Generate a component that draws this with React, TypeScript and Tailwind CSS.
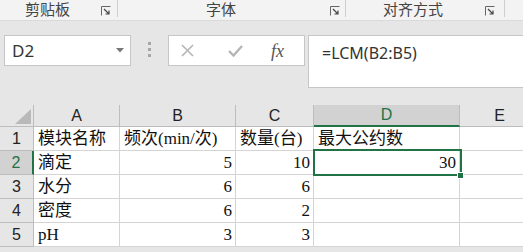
import React from "react";

const CJK = '"Liberation Serif", "Noto Sans CJK SC", serif';
const UI = '"Noto Sans", "Noto Sans CJK SC", sans-serif';
const HDR = '"Liberation Sans", sans-serif';

function Launcher() {
  return (
    <svg width="10" height="10" viewBox="0 0 10 10" className="shrink-0">
      <path d="M0.5 9.5 V0.5 H9.5" fill="none" stroke="#666" strokeWidth="1" />
      <path d="M3 3 L8 8 M8 4.5 V8 H4.5" fill="none" stroke="#444" strokeWidth="1.2" />
    </svg>
  );
}

type Cell = { t: string; r?: boolean };

const rows: Cell[][] = [
  [{ t: "模块名称" }, { t: "频次(min/次)" }, { t: "数量(台)" }, { t: "最大公约数" }, { t: "" }],
  [{ t: "滴定" }, { t: "5", r: true }, { t: "10", r: true }, { t: "30", r: true }, { t: "" }],
  [{ t: "水分" }, { t: "6", r: true }, { t: "6", r: true }, { t: "" }, { t: "" }],
  [{ t: "密度" }, { t: "6", r: true }, { t: "2", r: true }, { t: "" }, { t: "" }],
  [{ t: "pH" }, { t: "3", r: true }, { t: "3", r: true }, { t: "" }, { t: "" }],
];

const cols = ["A", "B", "C", "D", "E"];

function Group({ w, label, gap, launch }: { w: string; label: string; gap: string; launch: string }) {
  return (
    <div className={"flex items-start h-full " + w}>
      <div className="flex-1 flex items-center h-[19px]">
        <span className={"leading-[19px] " + gap}>{label}</span>
        <span className={"mt-[2px] " + launch}><Launcher /></span>
      </div>
      <div className="w-px h-[17px] bg-[#cfcfcf]" />
    </div>
  );
}

export default function App() {
  return (
    <div className="w-[523px] h-[252px] overflow-hidden bg-[#e6e6e6] relative">
      {/* ribbon group labels */}
      <div
        className="h-[21px] bg-[#f3f3f3] border-b border-[#dadada] flex items-start text-[15px] text-[#444]"
        style={{ fontFamily: UI }}
      >
        <Group w="w-[118px]" label="剪贴板" gap="ml-[25px]" launch="ml-[31px]" />
        <Group w="w-[228px]" label="字体" gap="ml-[88px]" launch="ml-[94px]" />
        <Group w="w-[159px]" label="对齐方式" gap="ml-[37px]" launch="ml-[42px]" />
      </div>

      {/* formula bar */}
      <div className="flex items-start pt-[14px] h-[84px]">
        <div className="ml-[4px] w-[127px] h-[31px] bg-white border border-[#c6c6c6] flex items-center justify-between pl-[7px] pr-[6px]">
          <span className="text-[17px] text-[#333] leading-none" style={{ fontFamily: UI }}>D2</span>
          <svg width="8" height="5" viewBox="0 0 8 5"><path d="M0 0 H8 L4 4.5 Z" fill="#777" /></svg>
        </div>
        <div className="ml-[17px] mt-[7px] flex flex-col gap-[3px]">
          <div className="w-[3px] h-[3px] bg-[#a6a6a6]" />
          <div className="w-[3px] h-[3px] bg-[#a6a6a6]" />
          <div className="w-[3px] h-[3px] bg-[#a6a6a6]" />
        </div>
        <div className="ml-[17px] w-[137px] h-[31px] bg-white border border-[#c6c6c6] flex items-center">
          <svg width="13" height="13" viewBox="0 0 13 13" className="ml-[12px]">
            <path d="M1 1 L12 12 M12 1 L1 12" stroke="#b5b5b5" strokeWidth="1.6" />
          </svg>
          <svg width="15" height="12" viewBox="0 0 15 12" className="ml-[34px]">
            <path d="M1 6 L5.5 10.5 L14 1" fill="none" stroke="#b5b5b5" strokeWidth="2.4" />
          </svg>
          <span
            className="ml-[28px] text-[18px] italic text-[#555] leading-none"
            style={{ fontFamily: '"Liberation Serif", serif' }}
          >
            fx
          </span>
        </div>
        <div className="ml-[3px] flex-1 h-[53px] bg-white border-l border-t border-b border-[#c6c6c6] pl-[13px] pt-[5px]">
          <span className="text-[16px] text-[#333]" style={{ fontFamily: UI }}>=LCM(B2:B5)</span>
        </div>
      </div>

      {/* grid */}
      <div
        className="absolute left-0 top-[105px] grid grid-cols-[34px_86px_116px_78px_146px_80px] grid-rows-[22px_24px_24px_24px_24px_24px] w-[540px]"
      >
        {/* corner */}
        <div className="bg-[#e6e6e6] border-r border-b border-[#bdbdbd] relative">
          <svg width="16" height="15" viewBox="0 0 16 15" className="absolute left-[15px] top-[4px]">
            <path d="M16 0 V15 H0 Z" fill="#b9b9b9" />
          </svg>
        </div>
        {cols.map((c) => {
          const sel = c === "D";
          return (
            <div
              key={c}
              className={
                "flex items-center justify-center text-[16px] border-r " +
                (sel
                  ? "bg-[#d2d2d2] text-[#217346] border-[#bdbdbd] border-b-2 border-b-[#217346]"
                  : "bg-[#e6e6e6] text-[#222] border-[#bdbdbd] border-b")
              }
              style={{ fontFamily: HDR }}
            >
              {c}
            </div>
          );
        })}
        {rows.map((row, i) => {
          const sel = i === 1;
          return (
            <React.Fragment key={i}>
              <div
                className={
                  "flex items-center justify-center text-[16px] border-b border-[#bdbdbd] " +
                  (sel
                    ? "bg-[#d2d2d2] text-[#217346] border-r-2 border-r-[#217346]"
                    : "bg-[#e6e6e6] text-[#222] border-r")
                }
                style={{ fontFamily: HDR }}
              >
                {i + 1}
              </div>
              {row.map((cell, j) => (
                <div
                  key={j}
                  className={
                    "bg-white border-r border-b border-[#d4d4d4] flex items-center text-[17px] text-[#111] whitespace-nowrap overflow-visible " +
                    (cell.r ? "justify-end pr-[3px]" : "justify-start pl-[4px]")
                  }
                  style={{ fontFamily: CJK }}
                >
                  {cell.t}
                </div>
              ))}
            </React.Fragment>
          );
        })}
      </div>

      {/* selection */}
      <div className="absolute left-[313px] top-[149px] w-[149px] h-[27px] border-2 border-[#217346] pointer-events-none" />
      <div className="absolute left-[457px] top-[172px] w-[7px] h-[7px] bg-[#217346] border border-white" />
    </div>
  );
}
